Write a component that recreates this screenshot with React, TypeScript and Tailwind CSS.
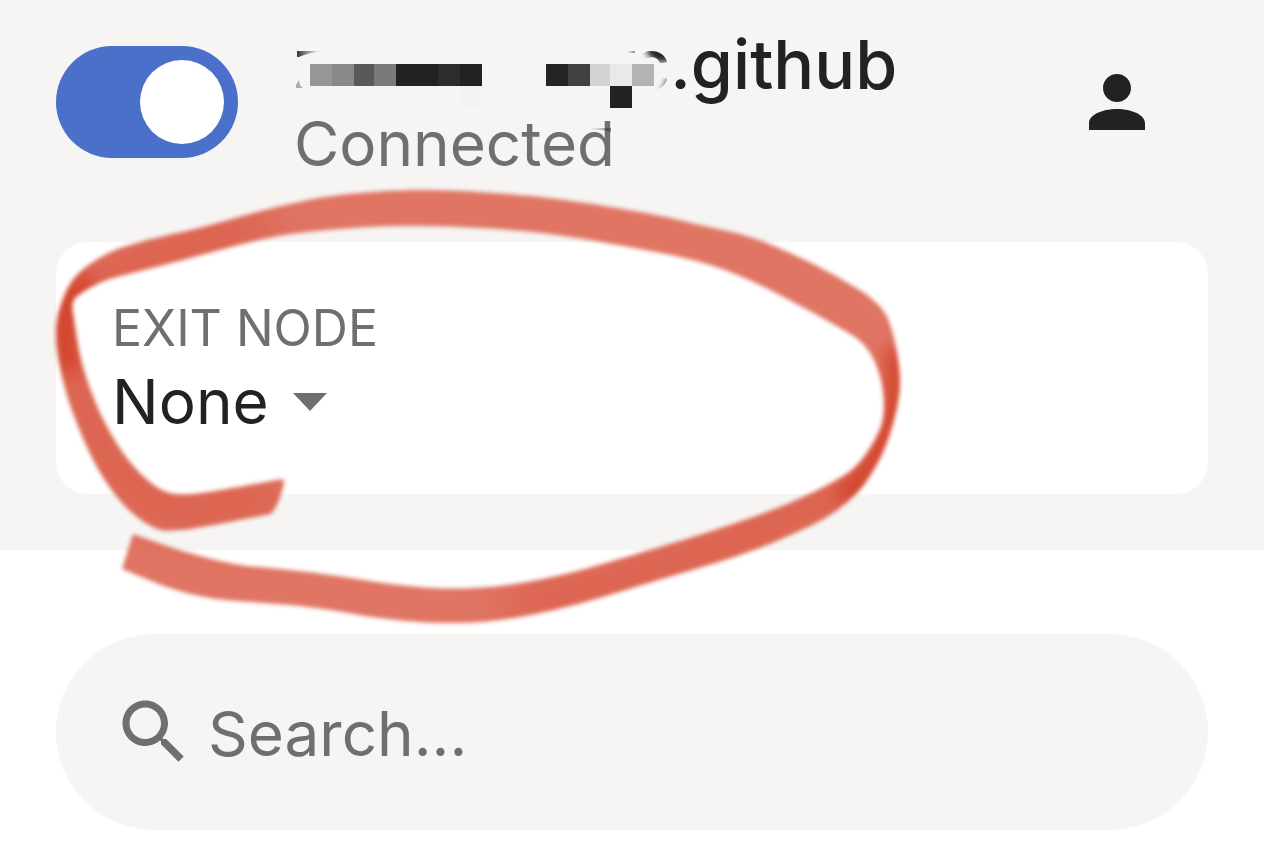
import { useState } from "react";

type Point = [number, number];

const outerEdge: Point[] = [
  [122, 569], [170, 588], [210, 598], [250, 602], [290, 605], [330, 610], [380, 618], [440, 623],
  [500, 620], [570, 606], [655, 581], [740, 555], [795, 533], [830, 515], [857, 493], [873, 471],
  [886, 445], [896, 412], [900, 382], [896, 347], [887, 317], [873, 300], [853, 286], [807, 261],
  [753, 238], [700, 225], [640, 212], [540, 197], [430, 190], [340, 195], [273, 208], [207, 226],
  [137, 243], [105, 255], [77, 275], [63, 299], [56, 330], [60, 367], [73, 413], [97, 467],
  [125, 506], [155, 528], [180, 530], [213, 525], [271, 514],
];

const innerEdge: Point[] = [
  [283, 479], [227, 489], [193, 494], [170, 493], [151, 483], [126, 457], [102, 417], [83, 367],
  [74, 320], [73, 302], [83, 292], [107, 280], [140, 271], [183, 260], [227, 248], [273, 237],
  [317, 231], [370, 227], [420, 226], [480, 228], [550, 234], [640, 249], [700, 262], [747, 279],
  [793, 302], [840, 328], [860, 341], [873, 358], [881, 380], [884, 403], [882, 423], [873, 443],
  [857, 465], [833, 482], [780, 507], [715, 530], [640, 553], [570, 573], [515, 584], [473, 588],
  [433, 588], [383, 583], [338, 576], [290, 570], [240, 565], [200, 556], [167, 546], [133, 534],
];

/** Catmull-Rom spline through the points, as cubic segments. */
function spline(points: Point[]): string {
  return points
    .slice(0, -1)
    .map((p1, i) => {
      const p0 = points[Math.max(i - 1, 0)];
      const p2 = points[i + 1];
      const p3 = points[Math.min(i + 2, points.length - 1)];
      const a = [p1[0] + (p2[0] - p0[0]) / 6, p1[1] + (p2[1] - p0[1]) / 6];
      const b = [p2[0] - (p3[0] - p1[0]) / 6, p2[1] - (p3[1] - p1[1]) / 6];
      return `C${a[0]} ${a[1]} ${b[0]} ${b[1]} ${p2[0]} ${p2[1]}`;
    })
    .join(" ");
}

const markerPath = `M122 569 ${spline(outerEdge)} Q280 503 284 483 L283 479 ${spline(innerEdge)} Z`;

function MarkerCircle() {
  return (
    <svg
      aria-hidden="true"
      width="1264"
      height="858"
      viewBox="0 0 1264 858"
      className="pointer-events-none absolute top-0 left-0"
    >
      <defs>
        <filter id="soft" x="-5%" y="-5%" width="110%" height="110%" colorInterpolationFilters="sRGB">
          <feGaussianBlur stdDeviation="2" />
        </filter>
        <filter id="shade" x="-50%" y="-50%" width="200%" height="200%" colorInterpolationFilters="sRGB">
          <feGaussianBlur stdDeviation="22" />
        </filter>
        <filter id="core" x="-50%" y="-50%" width="200%" height="200%" colorInterpolationFilters="sRGB">
          <feGaussianBlur stdDeviation="9" />
        </filter>
        <clipPath id="marker">
          <path d={markerPath} />
        </clipPath>
      </defs>
      <g filter="url(#soft)">
        <path d={markerPath} fill="#e07563" />
        <g clipPath="url(#marker)" fill="none" strokeLinecap="round">
          <path
            d="M260 226 Q80 270 66 310 Q62 390 125 480 Q150 515 180 512 L275 498 M520 606 Q620 585 700 552 Q800 518 850 488"
            stroke="#d95843"
            strokeWidth="30"
            filter="url(#shade)"
          />
          <path
            d="M84 284 Q66 300 64 320 L68 365 M895 355 Q900 390 888 430 Q872 475 845 495"
            stroke="#d03820"
            strokeWidth="17"
            filter="url(#core)"
          />
        </g>
      </g>
    </svg>
  );
}

function RedactedName() {
  return (
    <svg aria-hidden="true" width="378" height="80" viewBox="294 24 378 80" className="absolute top-0 left-0 overflow-visible">
      <defs>
        <filter id="feather" x="-30%" y="-30%" width="160%" height="160%">
          <feGaussianBlur stdDeviation="3" />
        </filter>
        <linearGradient id="fadeRight">
          <stop offset="0" stopColor="#222" stopOpacity="0.9" />
          <stop offset="0.7" stopColor="#222" stopOpacity="0.1" />
          <stop offset="1" stopColor="#222" stopOpacity="0" />
        </linearGradient>
        <linearGradient id="fadeLeft">
          <stop offset="0" stopColor="#222" stopOpacity="0" />
          <stop offset="1" stopColor="#222" stopOpacity="0.5" />
        </linearGradient>
      </defs>
      <path d="M620 40 H642 Q648 58 656 62 H676 V76 H669 L660 96 H620 Z" fill="#f6f5f4" filter="url(#feather)" />
      <rect x="640" y="63" width="33" height="13" fill="#f6f5f4" />
      <path d="M297 51 H325 Q306 53 299 57 H297 Z" fill="url(#fadeRight)" />
      <path d="M299 80 Q299 86 303 88 H296 V85 Z" fill="#222" fillOpacity="0.35" />
      <rect x="627" y="51" width="8" height="2" fill="url(#fadeLeft)" />
      <path d="M590 128 H611 V132 Q600 129 590 130 Z" fill="url(#fadeLeft)" />
      <g shapeRendering="crispEdges">
        <rect x="310" y="64" width="22" height="22" fill="#969694" />
        <rect x="332" y="64" width="22" height="22" fill="#888886" />
        <rect x="354" y="64" width="20" height="22" fill="#585858" />
        <rect x="374" y="64" width="22" height="22" fill="#7a7a78" />
        <rect x="396" y="64" width="42" height="22" fill="#222" />
        <rect x="438" y="64" width="22" height="22" fill="#2c2c2a" />
        <rect x="460" y="64" width="22" height="22" fill="#222" />
        <rect x="460" y="86" width="22" height="22" fill="#f4f3f2" />
        <rect x="546" y="64" width="22" height="22" fill="#262324" />
        <rect x="568" y="64" width="22" height="22" fill="#41413f" />
        <rect x="590" y="64" width="20" height="22" fill="#d5d4d2" />
        <rect x="610" y="64" width="22" height="22" fill="#eae9e8" />
        <rect x="632" y="64" width="22" height="22" fill="#b4b3b1" />
        <rect x="610" y="86" width="22" height="22" fill="#222" />
      </g>
    </svg>
  );
}

export default function App() {
  const [connected, setConnected] = useState(true);

  return (
    <div className="relative min-h-screen overflow-x-hidden bg-white font-['Inter','Liberation_Sans',sans-serif] text-[#222]">
      <header className="bg-[#f6f5f4] px-14 pt-5 pb-14">
        <div className="flex items-center gap-14">
          <input
            type="checkbox"
            role="switch"
            aria-label="Connection"
            checked={connected}
            onChange={(e) => setConnected(e.target.checked)}
            className="flex h-28 w-[182px] shrink-0 appearance-none items-center rounded-full bg-gray-400 px-3.5 before:size-[84px] before:rounded-full before:bg-white checked:justify-end checked:bg-[#4a70ca]"
          />
          <div className="min-w-0 grow pt-1">
            <div className="relative">
              <p className="pl-[337px] text-[68px] leading-[80px] font-medium">c.github</p>
              <RedactedName />
            </div>
            <p className="text-[62px] leading-[80px] text-[#706f6d]">Connected</p>
          </div>
          <button type="button" aria-label="Account" className="mr-[49px] shrink-0">
            <svg width="84" height="84" viewBox="0 0 24 24" fill="currentColor">
              <path d="M12 12c2.21 0 4-1.79 4-4s-1.79-4-4-4-4 1.79-4 4 1.79 4 4 4zm0 2c-4.42 0-8 1.79-8 4v2h16v-2c0-2.21-3.58-4-8-4z" />
            </svg>
          </button>
        </div>

        <section className="mt-[58px] rounded-[32px] bg-white px-14 pt-14 pb-12">
          <label htmlFor="exit-node" className="block text-[50px] leading-[60px] text-[#706f6d]">
            EXIT NODE
          </label>
          <div className="flex items-center gap-6">
            <select id="exit-node" className="h-[88px] appearance-none bg-transparent text-[62px] leading-[88px]">
              <option>None</option>
            </select>
            <svg aria-hidden="true" width="34" height="18" viewBox="0 0 34 18" fill="#706f6d">
              <path d="M0 0h34L17 18z" />
            </svg>
          </div>
        </section>
      </header>

      <main className="px-14 pt-[84px] pb-7">
        <label className="flex h-49 items-center gap-3 rounded-full bg-[#f6f5f4] px-14 text-[#706f6d]">
          <svg aria-hidden="true" width="84" height="84" viewBox="0 0 24 24" fill="currentColor" className="shrink-0">
            <path d="M15.5 14h-.79l-.28-.27C15.41 12.59 16 11.11 16 9.5 16 5.91 13.09 3 9.5 3S3 5.91 3 9.5 5.91 16 9.5 16c1.61 0 3.09-.59 4.23-1.57l.27.28v.79l5 4.99L20.49 19l-4.99-5zm-6 0C7.01 14 5 11.99 5 9.5S7.01 5 9.5 5 14 7.01 14 9.5 11.99 14 9.5 14z" />
          </svg>
          <input
            type="text"
            aria-label="Search"
            placeholder="Search..."
            className="min-w-0 grow bg-transparent pt-1 text-[62px] leading-[80px] outline-none placeholder:text-[#706f6d]"
          />
        </label>
      </main>

      <MarkerCircle />
    </div>
  );
}
